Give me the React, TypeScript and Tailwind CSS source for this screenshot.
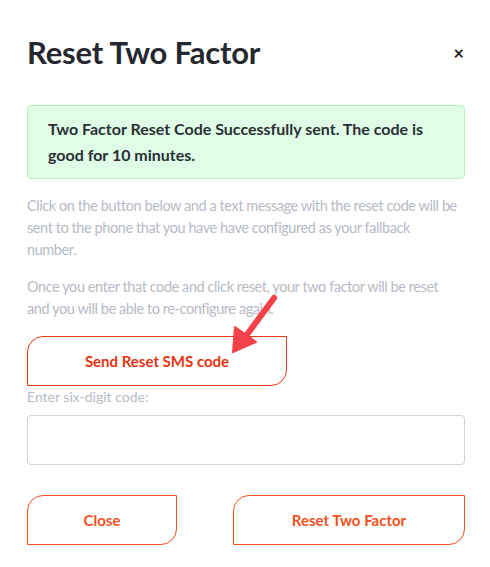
import { useState } from "react";

const ResetTwoFactor = () => {
  const [code, setCode] = useState("");

  return (
    <div className="min-h-[567px] bg-white pl-[27px] pr-[25px] pt-[34px] text-[#25282e]" style={{ fontFamily: "Lato, 'Noto Sans', sans-serif" }}>
      <div className="flex items-center justify-between">
        <h2 className="text-[31px] font-bold leading-[36px] tracking-[-0.2px]">Reset Two Factor</h2>
        <button className="mr-[1px] mt-[2px] text-[18px] font-bold leading-none text-[#222]">×</button>
      </div>

      <div className="mt-[35px] rounded-[4px] border border-[#b7efc4] bg-[#e0fde6] px-[20px] py-[10px] text-[16px] font-bold leading-[26px] text-[#2b2f36]">
        Two Factor Reset Code Successfully sent. The code is good for 10 minutes.
      </div>

      <p className="mt-[16px] whitespace-nowrap text-[14.5px] leading-[22px] tracking-[-0.42px] text-[#b6bbc5]">
        Click on the button below and a text message with the reset code will be<br />
        sent to the phone that you have have configured as your fallback<br />
        number.
      </p>
      <p className="mt-[15px] whitespace-nowrap text-[14.5px] leading-[22px] tracking-[-0.42px] text-[#b6bbc5]">
        Once you enter that code and click reset, your two factor will be reset<br />
        and you will be able to re-configure again.
      </p>

      <div className="relative">
        <button className="mt-[16px] h-[50px] w-[260px] rounded-tl-[16px] rounded-br-[16px] border border-[#e23c1b] text-[15px] font-bold text-[#e5340f]">
          Send Reset SMS code
        </button>
        <svg className="pointer-events-none absolute left-[198px] top-[-30px]" width="60" height="70" viewBox="0 0 60 70">
          <line x1="49" y1="8" x2="18" y2="50" stroke="#f5424a" strokeWidth="6" strokeLinecap="round" />
          <polygon points="8,62 10,37 31,52" fill="#f5424a" stroke="#f5424a" strokeWidth="2" strokeLinejoin="round" />
        </svg>
      </div>

      <label className="mt-[1px] block text-[14px] leading-[20px] text-[#b6bbc5]">Enter six-digit code:</label>
      <input
        value={code}
        onChange={e => setCode(e.target.value)}
        className="mt-[8px] block h-[50px] w-full rounded-[4px] border border-[#cfd3da] px-3 outline-none"
      />

      <div className="mt-[30px] flex justify-between">
        <button className="h-[50px] w-[150px] rounded-tl-[16px] rounded-br-[16px] border border-[#f4511e] text-[15px] font-bold text-[#f4511e]">
          Close
        </button>
        <button className="h-[50px] w-[232px] rounded-tl-[16px] rounded-br-[16px] border border-[#f4511e] text-[15px] font-bold text-[#f4511e]">
          Reset Two Factor
        </button>
      </div>
    </div>
  );
};

export default function App() {
  return <ResetTwoFactor />;
}
